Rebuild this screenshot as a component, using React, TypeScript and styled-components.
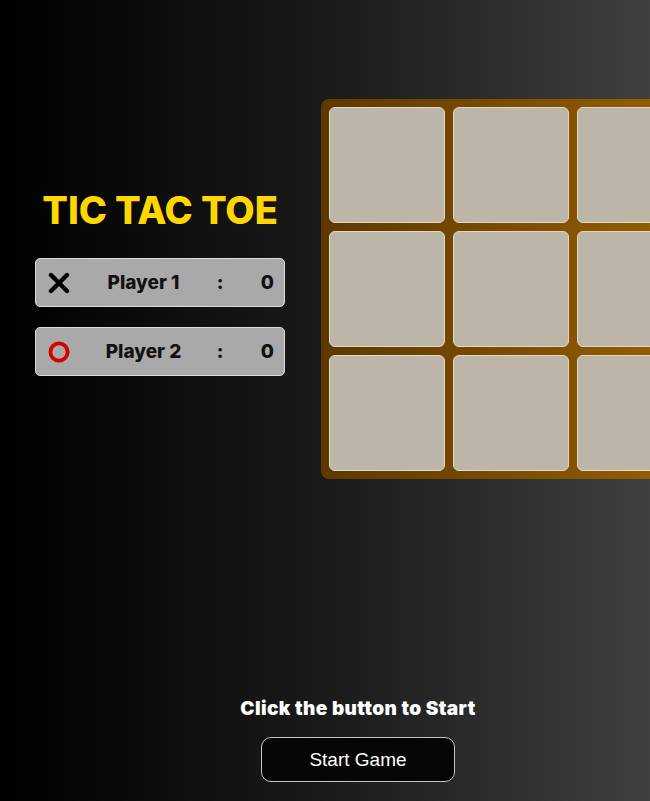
import styled, { createGlobalStyle } from "styled-components";

const GlobalStyle = createGlobalStyle`
  html, body {
    margin: 0;
    padding: 0;
    height: 100%;
    overflow: hidden;
  }
  body {
    background: linear-gradient(to right, #000000 0%, #1a1a1a 50%, #404040 100%);
    font-family: "Inter", "Liberation Sans", sans-serif;
  }
`;

const players = [
  { mark: "x", name: "Player 1", score: 0 },
  { mark: "o", name: "Player 2", score: 0 },
];

const XMark = () => (
  <svg width="22" height="22" viewBox="0 0 22 22">
    <path d="M3 3 L19 19 M19 3 L3 19" stroke="#000" strokeWidth="4.4" strokeLinecap="round" />
  </svg>
);

const OMark = () => (
  <svg width="24" height="24" viewBox="0 0 24 24">
    <circle cx="12" cy="12" r="8.6" fill="none" stroke="#d40000" strokeWidth="3.8" />
  </svg>
);

const App = () => {
  return (
    <>
      <GlobalStyle />
      <Page>
        <TopRow>
          <SidePanel>
            <Title>TIC TAC TOE</Title>
            <Scores>
              {players.map((p) => (
                <PlayerCard key={p.name}>
                  <Icon>{p.mark === "x" ? <XMark /> : <OMark />}</Icon>
                  <PlayerName>{p.name}</PlayerName>
                  <Colon>:</Colon>
                  <Score>{p.score}</Score>
                </PlayerCard>
              ))}
            </Scores>
          </SidePanel>
          <Board>
            {Array.from({ length: 9 }).map((_, i) => (
              <Cell key={i} />
            ))}
          </Board>
        </TopRow>
        <Footer>
          <Hint>Click the button to Start</Hint>
          <StartButton>Start Game</StartButton>
        </Footer>
      </Page>
    </>
  );
};

const Page = styled.div`
  display: flex;
  flex-direction: column;
  width: 716px;
  padding: 99px 15px 0 35px;
  box-sizing: border-box;
`;

const TopRow = styled.div`
  display: flex;
  align-items: center;
  gap: 36px;
`;

const SidePanel = styled.div`
  display: flex;
  flex-direction: column;
  flex-shrink: 0;
  width: 250px;
  margin-top: -14px;
`;

const Title = styled.h1`
  margin: 0;
  text-align: center;
  color: #ffd700;
  font-size: 38px;
  font-weight: 800;
  letter-spacing: -0.1px;
  line-height: 44px;
`;

const Scores = styled.div`
  display: flex;
  flex-direction: column;
  gap: 20px;
  margin-top: 26px;
`;

const PlayerCard = styled.div`
  display: grid;
  grid-template-columns: 24px 1fr 8px 50px;
  align-items: center;
  height: 49px;
  padding: 0 10px 0 11px;
  box-sizing: border-box;
  background: #a9a9a9;
  border: 1px solid #dcdcdc;
  border-radius: 5px;
  font-size: 19px;
  font-weight: 800;
  color: #111;
`;

const Icon = styled.div`
  display: flex;
  align-items: center;
  justify-content: center;
`;

const PlayerName = styled.span`
  text-align: center;
`;

const Colon = styled.span`
  text-align: center;
`;

const Score = styled.span`
  text-align: right;
`;

const Board = styled.div`
  display: grid;
  flex-shrink: 0;
  grid-template-columns: repeat(3, 116px);
  grid-template-rows: repeat(3, 116px);
  gap: 8px;
  padding: 8px;
  background: linear-gradient(to right, #5e3800, #9a6200);
  border-radius: 8px;
`;

const Cell = styled.div`
  background: #bdb5a8;
  border: 1px solid #ddd8cf;
  border-radius: 6px;
  box-sizing: border-box;
`;

const Footer = styled.div`
  display: flex;
  flex-direction: column;
  align-items: center;
  margin-top: 219px;
  padding-right: 20px;
  gap: 17px;
`;

const Hint = styled.div`
  color: #ffffff;
  font-size: 19px;
  font-weight: 900;
  letter-spacing: 0.4px;
  line-height: 22px;
`;

const StartButton = styled.button`
  width: 194px;
  height: 45px;
  background: #060606;
  color: #ffffff;
  border: 1px solid #c4c4c4;
  border-radius: 10px;
  font-family: "Liberation Sans", Arial, sans-serif;
  font-size: 19px;
`;

export default App;
